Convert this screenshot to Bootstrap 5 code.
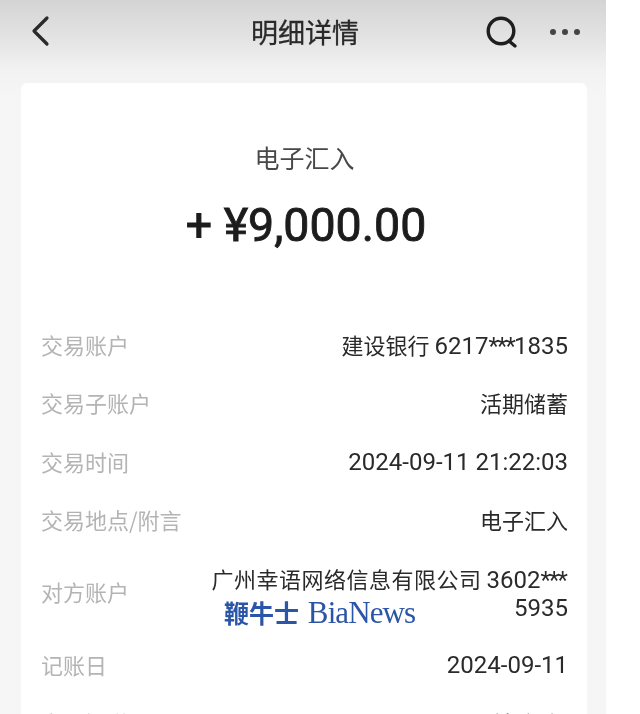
<!DOCTYPE html>
<html lang="zh-CN">
<head>
  <meta charset="UTF-8">
  <meta name="viewport" content="width=device-width, initial-scale=1.0">
  <title>明细详情</title>
  <link href="https://cdn.jsdelivr.net/npm/bootstrap@5.3.0/dist/css/bootstrap.min.css" rel="stylesheet">
  <style>
    html, body { height: 100%; }
    body {
      background: #fff;
      font-family: "Noto Sans CJK SC", "Roboto", sans-serif;
      overflow: hidden;
      color: #222;
    }
    .screen {
      width: 606px;
      height: 714px;
      overflow: hidden;
      background: linear-gradient(#d4d4d4 0, #e4e4e4 40px, #f2f2f2 70px, #f6f6f6 100px);
      filter: blur(.6px);
    }
    .top-bar { height: 62px; position: relative; }
    .top-title { font-size: 27px; font-weight: 400; color: #2a2a2a; line-height: 1; padding-left: 4px; -webkit-text-stroke: .3px #2a2a2a; }
    .back-btn { position: absolute; left: 30px; top: 14px; }
    .top-actions { position: absolute; left: 485px; top: 15px; gap: 30px; }
    .detail-sheet {
      margin: 21px 19px 0 21px;
      background: #fff;
      border-radius: 6px;
      height: 700px;
      padding: 0 19px 0 20px;
    }
    .type-label { padding-top: 58px; font-size: 25px; color: #484848; line-height: 32px; }
    .amount-text {
      font-family: "Roboto", "Noto Sans CJK SC", sans-serif;
      font-size: 46.5px;
      font-weight: 400;
      -webkit-text-stroke: .9px #1c1c1c;
      color: #1c1c1c;
      line-height: 52px;
      margin-top: 26px;
      padding-left: 3px;
    }
    .info-list { margin-top: 79px; }
    .info-row { font-size: 22px; line-height: 28px; height: 58.4px; }
    .info-row.tall { height: 86px; }
    .info-key { color: #b4b4b4; white-space: nowrap; }
    .info-key.mid-key { margin-top: 13px; }
    .info-val { color: #2a2a2a; text-align: right; }
    .info-val.num-part { margin-top: 2px; }
    .info-val.two-line { line-height: 26px; margin-top: 1px; }
    .num-part { font-family: "Roboto", sans-serif; font-size: 24px; line-height: 26px; }
    .star-part { letter-spacing: -1.8px; }
    .star-end { margin-right: 2px; }
    .wide-name { letter-spacing: .5px; }
    .water-mark {
      position: absolute;
      left: 224px;
      top: 596px;
      color: #2b55a6;
      font-family: "Liberation Serif", "Noto Sans CJK SC", serif;
      font-size: 31px;
      line-height: 34px;
      letter-spacing: -.9px;
      white-space: nowrap;
    }
    .water-mark b { font-size: 25px; letter-spacing: 0; margin-right: 2px; }
  </style>
</head>
<body>
  <div class="screen position-relative">
    <div class="top-bar d-flex align-items-center justify-content-center">
      <svg class="back-btn" width="20" height="34" viewBox="0 0 20 34" fill="none" stroke="#2a2a2a" stroke-width="3.2" stroke-linecap="round" stroke-linejoin="round"><path d="M17 4 4 17l13 13"/></svg>
      <div class="top-title">明细详情</div>
      <div class="top-actions d-flex align-items-center">
        <svg width="34" height="34" viewBox="0 0 34 34" fill="none" stroke="#1e1e1e" stroke-width="3.4" stroke-linecap="round"><circle cx="16" cy="16" r="12.8"/><path d="m24 26 6 5"/></svg>
        <svg width="32" height="8" viewBox="0 0 32 8" fill="#444"><circle cx="4" cy="4" r="3"/><circle cx="16" cy="4" r="3"/><circle cx="28" cy="4" r="3"/></svg>
      </div>
    </div>
    <div class="detail-sheet">
      <div class="type-label text-center">电子汇入</div>
      <div class="amount-text text-center">+ ¥9,000.00</div>
      <div class="info-list">
        <div class="info-row d-flex justify-content-between align-items-start"><span class="info-key">交易账户</span><span class="info-val">建设银行 <span class="num-part">6217<span class="star-part">***</span>1835</span></span></div>
        <div class="info-row d-flex justify-content-between align-items-start"><span class="info-key">交易子账户</span><span class="info-val">活期储蓄</span></div>
        <div class="info-row d-flex justify-content-between align-items-start"><span class="info-key">交易时间</span><span class="info-val num-part">2024-09-11 21:22:03</span></div>
        <div class="info-row d-flex justify-content-between align-items-start"><span class="info-key">交易地点/附言</span><span class="info-val">电子汇入</span></div>
        <div class="info-row tall d-flex justify-content-between align-items-start"><span class="info-key mid-key">对方账户</span><span class="info-val two-line"><span class="wide-name">广州幸语网络信息有限公司</span> <span class="num-part">3602<span class="star-part star-end">***</span><br>5935</span></span></div>
        <div class="info-row d-flex justify-content-between align-items-start"><span class="info-key">记账日</span><span class="info-val num-part">2024-09-11</span></div>
        <div class="info-row d-flex justify-content-between align-items-start"><span class="info-key">交易渠道</span><span class="info-val">手机银行</span></div>
      </div>
    </div>
    <div class="water-mark"><b>鞭牛士</b> BiaNews</div>
  </div>
</body>
</html>
